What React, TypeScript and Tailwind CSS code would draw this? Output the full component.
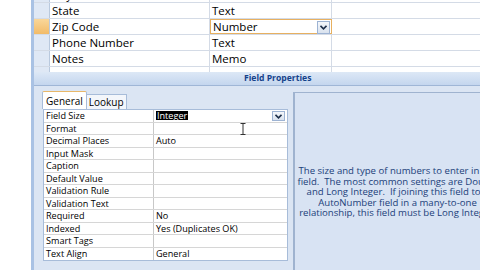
import React from 'react';

const FONT = { fontFamily: '"Open Sans", "Noto Sans", sans-serif' };

const FIELDS = [
  { name: 'City', type: 'Text' },
  { name: 'State', type: 'Text' },
  { name: 'Zip Code', type: 'Number', active: true },
  { name: 'Phone Number', type: 'Text' },
  { name: 'Notes', type: 'Memo' },
];

const PROPS = [
  ['Field Size', 'Integer'],
  ['Format', ''],
  ['Decimal Places', 'Auto'],
  ['Input Mask', ''],
  ['Caption', ''],
  ['Default Value', ''],
  ['Validation Rule', ''],
  ['Validation Text', ''],
  ['Required', 'No'],
  ['Indexed', 'Yes (Duplicates OK)'],
  ['Smart Tags', ''],
  ['Text Align', 'General'],
];

const HELP = [
  'The size and type of numbers to enter in the',
  'field.  The most common settings are Double',
  'and Long Integer.  If joining this field to a',
  'AutoNumber field in a many-to-one',
  'relationship, this field must be Long Integer.',
];

function DropButton({ className }: { className: string }) {
  return (
    <div className={`flex items-center justify-center border border-[#9db3d3] bg-gradient-to-b from-[#f4f7fb] to-[#d9e2ee] ${className}`}>
      <svg width="7" height="5" viewBox="0 0 7 5" aria-hidden>
        <path d="M0.5 0.8 L3.5 3.8 L6.5 0.8" fill="none" stroke="#1e2f4a" strokeWidth="1.6" />
      </svg>
    </div>
  );
}

export default function App() {
  return (
    <div className="flex h-[270px] w-[480px] overflow-hidden bg-white text-black" style={FONT}>
      <div className="w-[31px] shrink-0 bg-white" />
      <div className="w-[3px] shrink-0 bg-[#a9c2e4]" />

      <div className="flex min-w-0 flex-1 flex-col">
        {/* table design grid */}
        <div className="h-[72px] shrink-0 overflow-hidden">
          <div className="-mt-[13px]">
            {FIELDS.map((f) => (
              <div key={f.name} className="flex h-[16px] border-b border-[#d4dbe6]">
                <div
                  className={`w-[16px] shrink-0 border-r border-[#b9c9de] ${
                    f.active ? 'bg-gradient-to-b from-[#f9d79a] to-[#f2bb68]' : 'bg-[#dfe8f5]'
                  }`}
                />
                <div className="flex w-[160px] shrink-0 items-center border-r border-[#d4dbe6] pl-[2px] text-[11.5px] leading-none">
                  {f.name}
                </div>
                <div
                  className={`relative flex w-[122px] shrink-0 items-center pl-[2px] text-[11.5px] leading-none ${
                    f.active ? 'border border-[#e7b060]' : 'border-r border-[#d4dbe6]'
                  }`}
                >
                  {f.type}
                  {f.active && <DropButton className="absolute right-[1px] top-[1px] h-[13px] w-[13px]" />}
                </div>
                <div className="flex-1" />
              </div>
            ))}
            <div className="flex h-[8px]">
              <div className="w-[16px] shrink-0 border-r border-[#b9c9de] bg-[#dfe8f5]" />
              <div className="w-[160px] shrink-0 border-r border-[#d4dbe6]" />
              <div className="w-[122px] shrink-0 border-r border-[#d4dbe6]" />
            </div>
          </div>
        </div>

        {/* field properties bar */}
        <div className="flex h-[14px] shrink-0 items-center border-b border-[#9fb6d6] bg-gradient-to-b from-[#dde8f6] to-[#c4d6ee] pl-[210px]">
          <span className="text-[8.6px] font-bold leading-none text-[#15428b]">Field Properties</span>
        </div>

        {/* lower pane */}
        <div className="flex min-h-0 flex-1 bg-[#dbe5f3]">
          <div className="flex w-[256px] shrink-0 flex-col pl-[8px] pt-[5px]">
            <div className="flex items-end">
              <div className="flex h-[18px] items-center rounded-t-[2px] border border-b-0 border-[#a7bcd9] border-t-[#e8b86a] bg-white px-[3px] text-[10px] leading-none">
                General
              </div>
              <div className="flex h-[15px] items-center border border-b-0 border-l-0 border-[#a7bcd9] bg-[#f3f6fb] px-[2px] text-[10px] leading-none">
                Lookup
              </div>
            </div>
            <div className="ml-[1px] w-[245px] border border-[#a7bcd9] bg-white">
              {PROPS.map(([k, v], i) => (
                <div key={k} className="flex h-[12.5px] border-b border-[#d6d6d6] last:border-b-0">
                  <div className="flex w-[110px] shrink-0 items-center border-r border-[#c8c8c8] pl-[2px] text-[9.1px] leading-none">
                    {k}
                  </div>
                  <div className="relative flex flex-1 items-center pl-[2px] text-[9.1px] leading-none">
                    {i === 0 ? (
                      <>
                        <span className="bg-black px-[1px] text-white">{v}</span>
                        <DropButton className="absolute right-[2px] top-[1px] h-[10px] w-[13px]" />
                      </>
                    ) : (
                      v
                    )}
                    {i === 1 && (
                      <svg className="absolute left-[86px] top-[0px]" width="6" height="12" viewBox="0 0 6 12" aria-hidden>
                        <path d="M0.5 0.5 H5.5 M3 0.5 V11.5 M0.5 11.5 H5.5" stroke="#333" strokeWidth="1" fill="none" />
                      </svg>
                    )}
                  </div>
                </div>
              ))}
            </div>
          </div>

          <div className="ml-[3px] mt-[6px] flex min-w-0 flex-1 flex-col border-l-2 border-t border-[#9fb3cf] bg-[#d8e3f3]">
            <div className="flex w-[205px] flex-col items-center pt-[73px] text-[9.6px] leading-[10.5px] text-[#21417a]">
              {HELP.map((l) => (
                <div key={l} className="whitespace-pre">
                  {l}
                </div>
              ))}
            </div>
          </div>
        </div>
      </div>
    </div>
  );
}
